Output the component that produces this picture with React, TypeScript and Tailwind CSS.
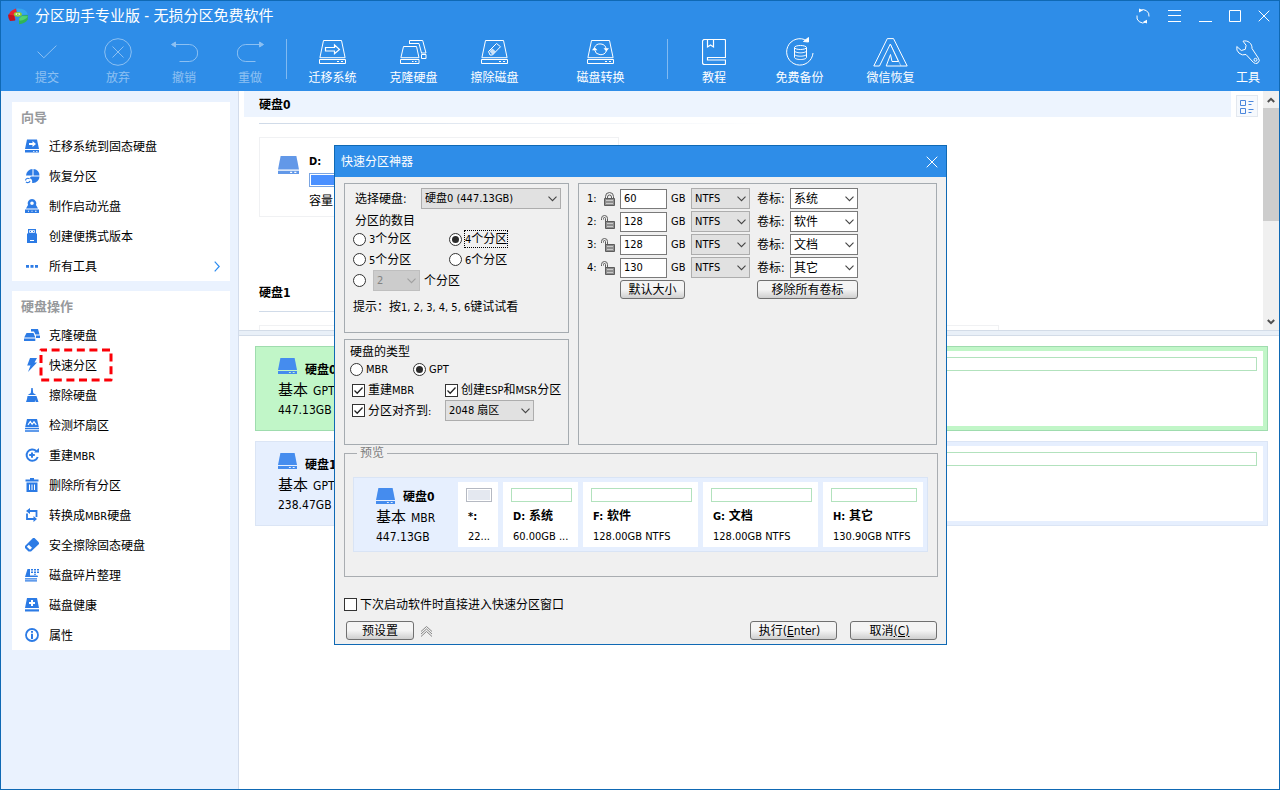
import React from "react";
import type { ReactNode } from "react";

/* ---------- text ---------- */

/* Latin runs are set one step smaller than the Chinese characters around them. */
function Mix({ children }: { children: string }) {
  const parts = children.split(/([\x21-\x7e]+(?: [\x21-\x7e]+)*)/);
  return (
    <>
      {parts.map((p, i) =>
        i % 2 === 1 ? (
          <span key={i} className="text-[11px]">
            {p}
          </span>
        ) : (
          p
        ),
      )}
    </>
  );
}

/* ---------- toolbar icons ---------- */

function Svg({ w, h, children }: { w: number; h: number; children: ReactNode }) {
  return (
    <svg width={w} height={h} viewBox={`0 0 ${w} ${h}`} fill="none" stroke="currentColor" aria-hidden="true" className="shrink-0">
      {children}
    </svg>
  );
}

const DriveOutline = () => (
  <>
    <path d="M4.5 .5h18l3.6 17.2H.9z" />
    <path d="M.5 19.5h26v4H.5z" />
    <path d="M18 21.5h2M22 21.5h2" />
  </>
);

const CommitIcon = () => (
  <Svg w={20} h={14}>
    <path d="M.6 6.6l6.2 6.2L19.4.6" />
  </Svg>
);
const DiscardIcon = () => (
  <Svg w={28} h={28}>
    <circle cx="14" cy="14" r="13.3" />
    <path d="M8.5 8.5l11 11M19.500 8.5l-11 11" />
  </Svg>
);
const UndoIcon = () => (
  <Svg w={27} h={22}>
    <path d="M2 3.500h16.200a8.500 8.500 0 010 17H8.500" />
    <path d="M.5 3.500L4.500 1v5z" fill="currentColor" />
  </Svg>
);
const RedoIcon = () => (
  <Svg w={27} h={22}>
    <path d="M25 3.500H8.800a8.500 8.500 0 000 17h9.700" />
    <path d="M26.500 3.500L22.500 1v5z" fill="currentColor" />
  </Svg>
);
const MigrateIcon = () => (
  <Svg w={27} h={24}>
    <DriveOutline />
    <path d="M6.500 7.500h9V4.800l5 4.700-5 4.300v-2.800h-9z" strokeWidth="1.200" />
  </Svg>
);
const CloneIcon = () => (
  <Svg w={27} h={24}>
    <path d="M9.500 4V.5h13.200l3.300 12.500h-5M9.500 3.500h9.500l2.500 9.500" />
    <path d="M3.500 6.500h13l2.500 11.200H.9z" />
    <path d="M.5 19.500h18.500v4H.5zM21.500 14.500h4.500v4h-4.500zM12 21.500h1.500M15 21.500h1.500" />
  </Svg>
);
const EraseIcon = () => (
  <Svg w={27} h={24}>
    <DriveOutline />
    <path d="M7.500 11.500l8-8 4 3.200-8 8.300H9z" />
    <path d="M8.500 11.300l3-2.800 3.300 3-3.300 3.200z" fill="currentColor" fillOpacity=".75" stroke="none" />
  </Svg>
);
const ConvertIcon = () => (
  <Svg w={27} h={24}>
    <DriveOutline />
    <path d="M7.500 7.500a6 5.500 0 0111.600 1.500M19.300 11a6 5.500 0 01-11.600-1" />
    <path d="M5 10.200h5.500L7.500 7zM16.500 8.300h5.500l-2.700 3.200z" fill="currentColor" stroke="none" />
  </Svg>
);
const TutorialIcon = () => (
  <Svg w={24} h={26}>
    <path d="M23.500 18.500v-17a1 1 0 00-1-1h-20a2 2 0 00-2 2v21a2 2 0 002 2h20a1 1 0 001-1v-3.500h-18v-2.500z" strokeWidth="1.200" />
    <path d="M5.500 .5v7.500l3-2 3 2V.5" strokeWidth="1.200" />
  </Svg>
);
const BackupIcon = () => (
  <Svg w={28} h={30}>
    <path d="M21 3.800A13.200 13.200 0 1027 16" />
    <path d="M17.500 4.500L22.500 5V.5z" fill="currentColor" />
    <ellipse cx="14.500" cy="10.500" rx="6" ry="2" />
    <path d="M8.500 10.500v10c0 1.100 2.700 2 6 2s6-.9 6-2v-10M8.500 13.800c0 1.100 2.700 2 6 2s6-.9 6-2M8.500 17.200c0 1.100 2.700 2 6 2s6-.9 6-2" />
  </Svg>
);
const WechatIcon = () => (
  <Svg w={35} h={29}>
    <path d="M14.300 .6h6.200L34.200 28H13.200L17.500 16.500l1.500 7h6.500L17.300 6 6.500 28H.8z" />
    <path d="M17.300 6l10.700 22" strokeOpacity=".5" />
  </Svg>
);
const WrenchIcon = () => (
  <Svg w={24} h={24}>
    <path d="M7 1.200a7 7 0 019 7.300l6.400 9.700a3.200 3.200 0 01-5 4.200L10 14.500A7 7 0 01.8 6.500l4.500 4 4-1.200.8-4z" />
    <circle cx="19.500" cy="19.800" r="1.500" />
  </Svg>
);

/* ---------- side panel icons, 14 x 14 ---------- */

function Glyph({ children }: { children: ReactNode }) {
  return (
    <svg width="16" height="16" viewBox="-1 -1 16 16" fill="currentColor" aria-hidden="true" className="shrink-0 text-[#2c7be5]">
      {children}
    </svg>
  );
}

const sideIcons: Record<string, ReactNode> = {
  migrate: (
    <>
      <path fillRule="evenodd" d="M2 .5h10l2 9.500H0zM4 4v2h3.500v2l3.500-3-3.500-3v2z" />
      <path fillRule="evenodd" d="M0 11h14v2.500H0zM8 12h1.500v.8H8zM11 12h1.500v.8H11z" />
    </>
  ),
  restore: (
    <>
      <path d="M7.500 0v6.500H1A6.800 6.800 0 017.500 0z" />
      <path d="M8.500 0a6.500 6.500 0 016 6.500h-6z" />
      <path d="M14.500 7.500A6.500 6.500 0 018 14l-1-.2c.8-2.300-.5-4-2.500-4.500L6 7.500z" />
      <path d="M.5 11.500a2.300 2.300 0 014-1.500M5 11.800a2.300 2.300 0 01-4 1" fill="none" stroke="currentColor" strokeWidth="1.100" />
    </>
  ),
  disc: (
    <>
      <path fillRule="evenodd" d="M7 0a4.300 4.300 0 014 6l2 3.500H1L3 6a4.300 4.300 0 014-6zM7 2.500a1.800 1.800 0 100 3.600 1.800 1.800 0 000-3.600z" />
      <path fillRule="evenodd" d="M0 10.500h14V14H0zM3 11.800h1v1H3zM6.500 11.800h1v1h-1zM10 11.800h1.500v1H10z" />
    </>
  ),
  usb: (
    <>
      <path fillRule="evenodd" d="M3 0h8v5H3zM4.200 1.200v2.600h5.600V1.200z" />
      <path d="M5 2h1v1H5zM8 2h1v1H8z" />
      <path fillRule="evenodd" d="M2 4.500h10V14H2zM5 11v1h4v-1z" />
    </>
  ),
  more: <path d="M1 6h3v2.800H1zM5.500 6h3v2.800h-3zM10 6h3v2.800h-3z" />,
  clone: (
    <>
      <path d="M6 1h7l1.500 5.500h-4L9 3.500H6zM11 7.500h4V10h-4zM1.500 5h7L10.300 9.500H-.8zM-1 10.500h11.300V13H-1z" />
    </>
  ),
  bolt: <path d="M5 0h7L9.500 4.500H12L3 14l2.500-6.500H2.200z" />,
  broom: <path d="M6.300 0h1.400l.5 5 3 2H2.800l3-2zM2.500 8h9l2 6h-2.800l-.5-2-.4 2H1l1-3z" />,
  surface: (
    <>
      <path d="M2 1h10l1.800 8H.2z" />
      <path d="M3 6.800L5.300 3.500l1.800 2.800L9 3.800l2.300 3" fill="none" stroke="#fff" strokeWidth="1.200" />
      <path d="M0 9.800h14v1.500H0zM0 12.300h14v1.500H0z" />
    </>
  ),
  rebuild: (
    <>
      <path d="M11.300 3A5.700 5.700 0 1012.700 9" fill="none" stroke="currentColor" strokeWidth="2" />
      <path d="M9 4.500h5V0zM6 4.500h2V6h1.800v2H8v1.800H6V8H4.200V6H6z" />
    </>
  ),
  trash: (
    <>
      <path d="M5 0h4v1.500h4.500v2H.5v-2H5z" />
      <path fillRule="evenodd" d="M1.500 4.500h11V14h-11zM4 6.500v5.500h1V6.500zM6.500 6.500v5.500h1V6.500zM9 6.500v5.500h1V6.500z" />
    </>
  ),
  swap: (
    <>
      <path d="M4 3h7.500v6M2 5.500V11h7" fill="none" stroke="currentColor" strokeWidth="1.800" />
      <path d="M5 0v6L1 3zM8.500 8v6l3.500-3z" />
    </>
  ),
  eraser: (
    <>
      <path d="M8 0h1.500L14 4.500V6l-8 7.500H3.500L0 10V8z" />
      <path d="M3.800 6.800L7 9.800 5 11.700 1.800 8.800z" fill="#fff" />
    </>
  ),
  defrag: (
    <>
      <path d="M2.500 1H5v6.500h7.500l.5 1.500H0z" />
      <path d="M6 1h2v1.600H6zM9 1h2v1.600H9zM12 1h2v1.600h-2zM6 3.400h2V5H6zM9 3.400h2V5H9zM12 3.400h2V5h-2zM9 5.800h2v1H9zM0 10.300h12v1.200H0zM0 12.300h12v1.200H0z" />
    </>
  ),
  health: (
    <>
      <path fillRule="evenodd" d="M2 0h10l2 10H0zM6 2v2H4v2h2v2h2V6h2V4H8V2z" />
      <path d="M0 11.300h14v2.200H0z" />
    </>
  ),
  info: (
    <>
      <circle cx="7" cy="7" r="6" fill="none" stroke="currentColor" strokeWidth="1.800" />
      <path d="M6 3h2v1.800H6zM6 5.800h2V11H6z" />
    </>
  ),
};

/* ---------- shared pieces ---------- */

function DiskIcon({ className }: { className: string }) {
  return (
    <svg viewBox="0 0 20 16" preserveAspectRatio="none" fill="currentColor" aria-hidden="true" className={className}>
      <path d="M2.500 0h15L20 12H0z" />
      <path fillRule="evenodd" d="M0 13h20v3H0zM11.500 14h2v1h-2zM15.500 14h2v1h-2z" />
    </svg>
  );
}

function Chevron({ className }: { className: string }) {
  return (
    <svg width="9" height="6" viewBox="0 0 9 6" fill="none" stroke="currentColor" strokeWidth="1.100" aria-hidden="true" className={className}>
      <path d="M.5 .7l4 4 4-4" />
    </svg>
  );
}

type DropProps = {
  options: string;
  label: string;
  id?: string;
  className: string;
  tone?: "grey" | "white" | "off";
};

function Drop({ options, label, id, className, tone = "grey" }: DropProps) {
  const tones = {
    grey: "border-[#adadad] bg-[#e1e1e1] text-black",
    white: "border-[#7a7a7a] bg-white text-black",
    off: "border-[#bfbfbf] bg-[#cccccc] text-[#838383]",
  };
  return (
    <span className={`relative inline-block h-[21px] ${className}`}>
      <select id={id} aria-label={id ? undefined : label} disabled={tone === "off"} className={`block h-full w-full appearance-none border pl-[3px] opacity-100 outline-none ${tones[tone]}`}>
        <option>{options}</option>
      </select>
      <Chevron className={`pointer-events-none absolute top-2 right-1 ${tone === "off" ? "text-[#a0a0a0]" : "text-[#444]"}`} />
    </span>
  );
}

type ChoiceProps = { label?: string; checked?: boolean; name?: string; focus?: boolean; className?: string };

function Radio({ label, checked, name, focus, className = "" }: ChoiceProps) {
  return (
    <label className={`flex items-center gap-[2px] whitespace-nowrap ${className}`}>
      <input
        type="radio"
        name={name}
        defaultChecked={checked}
        aria-label={label ? undefined : "2 个分区"}
        className="grid size-[13px] shrink-0 appearance-none place-items-center rounded-full border border-[#333] bg-white checked:before:size-[7px] checked:before:rounded-full checked:before:bg-[#2b2b2b]"
      />
      {label && (
        <span className={`border border-dotted pt-px leading-[14px] ${focus ? "border-black" : "border-transparent"}`}>
          <Mix>{label}</Mix>
        </span>
      )}
    </label>
  );
}

function Check({ label, checked, className = "" }: ChoiceProps) {
  return (
    <label className={`flex items-center gap-[3px] whitespace-nowrap ${className}`}>
      <span className="relative size-[13px] shrink-0">
        <input type="checkbox" defaultChecked={checked} className="peer block size-[13px] appearance-none border border-[#333] bg-white" />
        <svg viewBox="0 0 13 13" fill="none" stroke="#222" strokeWidth="1.300" aria-hidden="true" className="pointer-events-none absolute inset-0 hidden peer-checked:block">
          <path d="M2.500 6.500l2.700 2.700 5.300-5.700" />
        </svg>
      </span>
      <span className="pt-px">
        <Mix>{label ?? ""}</Mix>
      </span>
    </label>
  );
}

function PushButton({ children, className }: { children: ReactNode; className: string }) {
  return (
    <button type="button" className={`h-[19px] rounded-[3px] border border-[#707070] bg-linear-to-b from-[#f4f4f4] from-50% to-[#cfcfcf] pt-px text-center leading-4 whitespace-nowrap ${className}`}>
      {children}
    </button>
  );
}

/* ---------- header ---------- */

function Logo() {
  return (
    <svg width="20" height="17" viewBox="0 0 20 17" aria-hidden="true">
      <path d="M8 .6L9 6 6.500 7.500l1 4.500-5.500.5Q-2 4 8 .6z" fill="#e8262f" />
      <path d="M0 6.500l6 1 1.200 5L2 13Q0 10.500 0 6.500z" fill="#c3121f" />
      <path d="M8.500 .6Q18 0 19.800 6.500l-6 .3Q13 4.500 9.300 4.500z" fill="#35a6ee" />
      <path d="M13.500 7.500l6.300-.4v4.500Q17 16 11 16.200V10.800z" fill="#2fb457" />
      <path d="M11 10.500L13.800 8l6 .2Q18 12 11.500 12.800z" fill="#4fd272" />
      <ellipse cx="9.800" cy="6.300" rx="4" ry="2.400" fill="#8fcf2c" />
      <ellipse cx="9.800" cy="6.100" rx="2.400" ry="1.200" fill="#f2f7c8" />
      <ellipse cx="9.800" cy="6.100" rx="1.100" ry=".6" fill="#4a9d25" />
    </svg>
  );
}

function Tool({ icon, label, className, off }: { icon: ReactNode; label: string; className: string; off?: boolean }) {
  return (
    <button type="button" disabled={off} className={`flex shrink-0 flex-col items-center text-white ${off ? "opacity-45" : ""} ${className}`}>
      <span className="flex h-8 items-center">{icon}</span>
      <span className="mt-[2px] leading-4 whitespace-nowrap">{label}</span>
    </button>
  );
}

const Rule = ({ className }: { className: string }) => <span className={`mt-[3px] h-10 w-px shrink-0 bg-white/40 ${className}`} />;

function WindowButtons() {
  return (
    <div className="flex items-center gap-[17px] pr-[9px] text-white">
      <button type="button" aria-label="刷新">
        <Svg w={16} h={16}>
          <path d="M5 2.500A6 6 0 0114 8.500M11 14A6 6 0 012 7.500" />
          <path d="M4 4.500V.5l4 1.800zM12 11.800v3.700l-3.800-1.700z" fill="currentColor" stroke="none" />
        </Svg>
      </button>
      <button type="button" aria-label="菜单">
        <Svg w={14} h={12}>
          <path d="M0 .5h13M0 5.500h13M0 11.500h13" />
        </Svg>
      </button>
      <button type="button" aria-label="最小化">
        <Svg w={13} h={12}>
          <path d="M0 11.500h13" />
        </Svg>
      </button>
      <button type="button" aria-label="最大化">
        <Svg w={12} h={12}>
          <path d="M.5 .5h11v11H.5z" />
        </Svg>
      </button>
      <button type="button" aria-label="关闭">
        <Svg w={12} h={12}>
          <path d="M.7 .7l10.600 10.600M11.300 .7L.7 11.300" />
        </Svg>
      </button>
    </div>
  );
}

function Header() {
  return (
    <header className="bg-[#2e8de8] text-white">
      <div className="flex h-[30px] items-center justify-between">
        <div className="flex items-center gap-[7px] pl-[7px]">
          <Logo />
          <h1 className="text-[15px] leading-5 whitespace-nowrap">分区助手专业版 - 无损分区免费软件</h1>
        </div>
        <WindowButtons />
      </div>
      <nav className="flex h-[60px] items-start pt-[5px] pl-[13px]">
        <Tool off icon={<CommitIcon />} label="提交" className="mr-[5px] w-[66px]" />
        <Tool off icon={<DiscardIcon />} label="放弃" className="w-[66px]" />
        <Tool off icon={<UndoIcon />} label="撤销" className="w-[66px]" />
        <Tool off icon={<RedoIcon />} label="重做" className="w-[66px]" />
        <Rule className="mx-[3px]" />
        <Tool icon={<MigrateIcon />} label="迁移系统" className="ml-[2px] w-[81px]" />
        <Tool icon={<CloneIcon />} label="克隆硬盘" className="w-[81px]" />
        <Tool icon={<EraseIcon />} label="擦除磁盘" className="mr-[25px] w-[81px]" />
        <Tool icon={<ConvertIcon />} label="磁盘转换" className="w-[81px]" />
        <Rule className="mr-3 ml-[26px]" />
        <Tool icon={<TutorialIcon />} label="教程" className="w-[68px]" />
        <Tool icon={<BackupIcon />} label="免费备份" className="ml-[6px] w-[91px]" />
        <Tool icon={<WechatIcon />} label="微信恢复" className="w-[91px]" />
        <Tool icon={<WrenchIcon />} label="工具" className="mr-[10px] ml-auto w-[42px]" />
      </nav>
    </header>
  );
}

/* ---------- side panels ---------- */

const wizardItems = [
  ["migrate", "迁移系统到固态硬盘"],
  ["restore", "恢复分区"],
  ["disc", "制作启动光盘"],
  ["usb", "创建便携式版本"],
  ["more", "所有工具"],
];

const diskItems = [
  ["clone", "克隆硬盘"],
  ["bolt", "快速分区"],
  ["broom", "擦除硬盘"],
  ["surface", "检测坏扇区"],
  ["rebuild", "重建MBR"],
  ["trash", "删除所有分区"],
  ["swap", "转换成MBR硬盘"],
  ["eraser", "安全擦除固态硬盘"],
  ["defrag", "磁盘碎片整理"],
  ["health", "磁盘健康"],
  ["info", "属性"],
];

function SidePanel({ title, items }: { title: string; items: string[][] }) {
  return (
    <section className="bg-white">
      <h2 className="h-[29px] pl-[9px] text-[13px] leading-[31px] font-bold text-[#97999c]">{title}</h2>
      <ul>
        {items.map(([icon, label]) => (
          <li key={label}>
            <button type="button" className="flex h-[30px] w-full items-center gap-[9px] pr-[10px] pl-3 text-left">
              <Glyph>{sideIcons[icon]}</Glyph>
              <span className="relative pt-[2px] leading-4">
                <Mix>{label}</Mix>
                {icon === "bolt" && (
                  <svg width="74" height="34" viewBox="0 0 74 34" fill="none" stroke="#fb0007" strokeWidth="3" aria-hidden="true" className="pointer-events-none absolute -top-2 -left-[10px]">
                    <path d="M2 2H72V32H2z" strokeDasharray="8 4.600" strokeDashoffset="2" strokeLinejoin="round" />
                  </svg>
                )}
              </span>
              {icon === "more" && (
                <svg width="6" height="11" viewBox="0 0 6 11" fill="none" stroke="#2c8cf0" strokeWidth="1.200" aria-hidden="true" className="ml-auto">
                  <path d="M.7 .7l4.500 4.800-4.500 4.800" />
                </svg>
              )}
            </button>
          </li>
        ))}
      </ul>
    </section>
  );
}

/* ---------- volume list ---------- */

function DiskHeading({ name, tinted }: { name: string; tinted?: boolean }) {
  return (
    <>
      <h3 className={`ml-[5px] pt-[2px] pl-[15px] text-[12px] leading-6 font-bold ${tinted ? "mr-8 bg-[#edf4fe]" : ""}`}>{name}</h3>
      <div className="mt-[6px] ml-5 h-px w-[510px] bg-linear-to-r from-[#cfdae8] to-white" />
    </>
  );
}

function VolumeCard({ children }: { children?: ReactNode }) {
  return <div className="h-20 w-[360px] border border-[#f0f1f3] pt-4 pl-[18px]">{children}</div>;
}

function VolumeList() {
  return (
    <section className="relative flex h-[239px] overflow-hidden">
      <div className="min-w-0 flex-1">
        <DiskHeading name="硬盘0" tinted />
        <div className="mt-[13px] flex pl-5">
          <VolumeCard>
            <div className="flex gap-[10px]">
              <DiskIcon className="mt-[2px] h-[18px] w-[21px] shrink-0 text-[#6298e8]" />
              <div className="flex-1 pr-4">
                <p className="text-[11px] leading-4 font-bold">D:</p>
                <div className="mt-[3px] h-[14px] border border-[#7aa5e2] p-px">
                  <div className="h-full w-3/4 bg-[#4a90ff]" />
                </div>
                <p className="mt-[6px] leading-4">容量</p>
              </div>
            </div>
          </VolumeCard>
        </div>
        <div className="mt-[62px]">
          <DiskHeading name="硬盘1" />
        </div>
        <div className="mt-[13px] flex gap-5 pl-5">
          <VolumeCard />
          <VolumeCard />
        </div>
      </div>
      <button type="button" aria-label="视图" className="absolute top-1 right-[21px] grid size-[22px] place-items-center border border-[#e3e8ef] bg-[#f6f9fd] text-[#4a86dc]">
        <Svg w={14} h={15}>
          <path d="M.5 1.500h5v5h-5zM.5 9.500h5v5h-5zM8.500 2.500h5M8.500 5.500h3M8.500 10.500h5M8.500 13.500h3" />
        </Svg>
      </button>
      <div className="flex w-4 shrink-0 flex-col items-center bg-[#f0f0f0] text-[#505050]">
        <span className="grid h-[17px] place-items-center">
          <svg width="8" height="6" viewBox="0 0 8 6" fill="none" stroke="currentColor" strokeWidth="2" aria-hidden="true">
            <path d="M.8 5L4 1.800 7.200 5" />
          </svg>
        </span>
        <span className="h-[113px] w-full bg-[#cdcdcd]" />
        <span className="mt-auto grid h-[17px] place-items-center">
          <svg width="8" height="6" viewBox="0 0 8 6" fill="none" stroke="currentColor" strokeWidth="2" aria-hidden="true">
            <path d="M.8 1L4 4.200 7.200 1" />
          </svg>
        </span>
      </div>
    </section>
  );
}

/* ---------- disk map ---------- */

function DiskSummary({ name, scheme, size, roomy }: { name: string; scheme: string; size: string; roomy?: boolean }) {
  return (
    <div className={`w-[100px] shrink-0 pl-[18px] whitespace-nowrap ${roomy ? "pt-[7px]" : "pt-[6px]"}`}>
      <div className="flex gap-2">
        <DiskIcon className="h-4 w-[19px] text-[#458cee]" />
        <span className={`text-[12px] leading-4 font-bold ${roomy ? "mt-1" : "mt-px"}`}>{name}</span>
      </div>
      <p className="mt-[2px] flex items-baseline gap-[5px] text-[15px] leading-5">
        基本 <span className="text-[12px]">{scheme}</span>
      </p>
      <p className="text-[12px] leading-[18px]">{size}</p>
    </div>
  );
}

function DiskMap({ name, size, selected }: { name: string; size: string; selected?: boolean }) {
  return (
    <div className={`flex h-[85px] border p-1 ${selected ? "border-[#9fdcae] bg-[#c1f6c8]" : "border-[#dbe5f5] bg-[#e6effe]"}`}>
      <DiskSummary name={name} scheme="GPT" size={size} roomy />
      <div className="flex-1 bg-white pt-[6px] pr-[6px] pl-2">
        <div className="h-[14px] border border-[#b2e2bd]" />
      </div>
    </div>
  );
}

/* ---------- dialog ---------- */

function Padlock({ open }: { open?: boolean }) {
  return (
    <svg width="14" height="14" viewBox="0 0 14 14" fill="none" stroke="#5c5c5c" aria-hidden="true">
      {open ? <path d="M.5 5V3.500a3 3 0 016 0V7M2.500 4.500V3.500a1 1 0 012 0V7" /> : <path d="M4.500 6V4.500a4 4 0 018 0V6M6.500 6V5a2 2 0 014 0v1" />}
      <path d={open ? "M4.500 6.500h9v7h-9z" : "M3.500 6.500h10v7h-10z"} fill="#8e8e8e" />
      <path d={open ? "M6 8.500h6M6 11.500h6" : "M5 8.500h7M5 11.500h7"} stroke="#c9c9c9" />
    </svg>
  );
}

const rows = [
  { n: 1, size: "60", label: "系统", locked: true },
  { n: 2, size: "128", label: "软件", locked: false },
  { n: 3, size: "128", label: "文档", locked: false },
  { n: 4, size: "130", label: "其它", locked: false },
];

function SizeGrid() {
  return (
    <section className="mr-px border border-[#a5abb0] px-2 pt-1">
      <div className="grid grid-cols-[14px_19px_51px_20px_66px_33px_68px] items-center gap-y-[2px]">
        {rows.map((r) => (
          <React.Fragment key={r.n}>
            <label htmlFor={`size-${r.n}`} className="text-[11px]">
              {r.n}:
            </label>
            <Padlock open={!r.locked} />
            <input id={`size-${r.n}`} defaultValue={r.size} className="h-5 w-[47px] border border-[#7a7a7a] bg-white px-[3px] text-[11px] outline-none" />
            <span className="text-[11px]">GB</span>
            <Drop options="NTFS" label="NTFS" className="w-[59px] text-[11px]" />
            <label htmlFor={`volume-${r.n}`}>卷标:</label>
            <Drop id={`volume-${r.n}`} options={r.label} label="卷标" tone="white" className="w-[68px]" />
          </React.Fragment>
        ))}
        <PushButton className="col-span-2 col-start-3 w-[65px]">默认大小</PushButton>
        <PushButton className="col-span-2 col-start-6 w-full">移除所有卷标</PushButton>
      </div>
    </section>
  );
}

function CountBox() {
  return (
    <section className="h-[150px] border border-[#a5abb0] pt-1 pl-2">
      <div className="flex items-center pl-[2px]">
        <label htmlFor="disk" className="w-[66px]">
          选择硬盘:
        </label>
        <Drop id="disk" options="硬盘0 (447.13GB)" label="选择硬盘" className="w-[140px] text-[11px]" />
      </div>
      <p className="mt-1 pt-px pl-[2px] leading-[15px]">分区的数目</p>
      <div className="grid grid-cols-[96px_1fr]">
        <Radio name="count" label="3个分区" className="h-5" />
        <Radio name="count" label="4个分区" checked focus className="h-5" />
        <Radio name="count" label="5个分区" className="h-[21px]" />
        <Radio name="count" label="6个分区" className="h-[21px]" />
      </div>
      <div className="flex items-center">
        <Radio name="count" />
        <Drop options="2" label="分区数目" tone="off" className="mr-1 ml-[7px] w-[47px] text-[11px]" />
        <span>个分区</span>
      </div>
      <p className="mt-2 leading-4">
        <Mix>提示：按1, 2, 3, 4, 5, 6键试试看</Mix>
      </p>
    </section>
  );
}

function TypeBox() {
  return (
    <section className="h-[106px] border border-[#a5abb0] pt-1 pl-[5px]">
      <p className="leading-4">硬盘的类型</p>
      <div className="grid h-[18px] grid-cols-[63px_1fr] items-center">
        <Radio name="scheme" label="MBR" />
        <Radio name="scheme" label="GPT" checked />
      </div>
      <div className="mt-[2px] grid grid-cols-[93px_1fr] items-center pl-[2px]">
        <Check label="重建MBR" checked className="h-5" />
        <Check label="创建ESP和MSR分区" checked className="h-5" />
        <Check label="分区对齐到:" checked className="h-[21px]" />
        <Drop options="2048 扇区" label="分区对齐到" className="w-[89px] text-[11px]" />
      </div>
    </section>
  );
}

const previews = [
  { name: "*:", info: "22...", box: "w-10", bar: "border-[#b5b9c2] bg-[#e4e8f0] ring-1 ring-white ring-inset" },
  { name: "D: 系统", info: "60.00GB ...", box: "w-[75px]", bar: "border-[#b2e2bd]" },
  { name: "F: 软件", info: "128.00GB NTFS", box: "w-[115px]", bar: "border-[#b2e2bd]" },
  { name: "G: 文档", info: "128.00GB NTFS", box: "w-[115px]", bar: "border-[#b2e2bd]" },
  { name: "H: 其它", info: "130.90GB NTFS", box: "flex-1", bar: "border-[#b2e2bd]" },
];

function Preview() {
  return (
    <fieldset className="border border-[#a9adb1] pt-4 pr-[9px] pb-6 pl-2">
      <legend className="ml-1 px-[3px] leading-4 text-[#7d7d7d]">预览</legend>
      <div className="flex h-[75px] gap-[5px] border border-[#d9e4f5] bg-[#e6effe] p-1">
        <div className="w-[95px] shrink-0">
          <DiskSummary name="硬盘0" scheme="MBR" size="447.13GB" />
        </div>
        {previews.map((p) => (
          <div key={p.name} className={`min-w-0 shrink-0 bg-white pt-[6px] pr-[6px] pl-2 whitespace-nowrap ${p.box}`}>
            <div className={`h-[14px] border ${p.bar}`} />
            <p className="mt-[6px] pl-[2px] leading-4 font-bold">
              <Mix>{p.name}</Mix>
            </p>
            <p className="mt-1 pl-[2px] text-[11px] leading-4">{p.info}</p>
          </div>
        ))}
      </div>
    </fieldset>
  );
}

function QuickPartitionDialog() {
  return (
    <div className="pointer-events-none fixed inset-0 flex items-center justify-center pl-px">
      <div role="dialog" aria-labelledby="dialog-title" className="pointer-events-auto w-[613px] border border-[#0f69b4] bg-[#f0f0f0]">
        <div className="flex h-[31px] items-center justify-between bg-[#2e8de8] pr-2 pl-[6px] text-white">
          <h2 id="dialog-title" className="pt-px">
            快速分区神器
          </h2>
          <button type="button" aria-label="关闭">
            <Svg w={12} h={12}>
              <path d="M.7 .7l10.600 10.600M11.300 .7L.7 11.300" />
            </Svg>
          </button>
        </div>
        <div className="pt-[6px] pr-2 pb-1 pl-[9px]">
          <div className="grid grid-cols-[225px_1fr] gap-[9px]">
            <div className="flex flex-col gap-[6px]">
              <CountBox />
              <TypeBox />
            </div>
            <SizeGrid />
          </div>
          <Preview />
          <Check label="下次启动软件时直接进入快速分区窗口" className="mt-[19px] h-4" />
          <div className="mt-[9px] flex items-center pr-px pl-[2px]">
            <PushButton className="w-[68px]">预设置</PushButton>
            <button type="button" aria-label="收起" className="ml-[6px] text-[#7b7b7b]">
              <Svg w={13} h={12}>
                <path d="M1 6.500l5.500-5 5.500 5M1 9l5.500-5L12 9M1 11.500l5.500-5 5.500 5" strokeWidth=".9" />
              </Svg>
            </button>
            <PushButton className="ml-auto w-[87px] pr-2">
              执行(<u>E</u>nter)
            </PushButton>
            <PushButton className="ml-[13px] w-[87px] pr-2">
              取消<u>(C)</u>
            </PushButton>
          </div>
        </div>
      </div>
    </div>
  );
}

export default function App() {
  return (
    <div className="flex min-h-screen flex-col border border-[#0f69b4] bg-white font-['DejaVu_Sans_Condensed','Noto_Sans','Noto_Sans_CJK_SC',sans-serif] text-[12px] leading-4 text-black">
      <Header />
      <div className="flex flex-1">
        <aside className="flex w-[238px] shrink-0 flex-col gap-[10px] border-r border-[#d3dceb] bg-[#eaf2fe] pt-[11px] pr-2 pl-[11px]">
          <SidePanel title="向导" items={wizardItems} />
          <SidePanel title="硬盘操作" items={diskItems} />
        </aside>
        <main className="min-w-0 flex-1">
          <VolumeList />
          <div className="h-[6px] border-y border-[#d3dce8] bg-[#e9f0f8]" />
          <section className="flex flex-col gap-[10px] pt-[10px] pr-[11px] pl-4">
            <DiskMap name="硬盘0" size="447.13GB" selected />
            <DiskMap name="硬盘1" size="238.47GB" />
          </section>
        </main>
      </div>
      <QuickPartitionDialog />
    </div>
  );
}
